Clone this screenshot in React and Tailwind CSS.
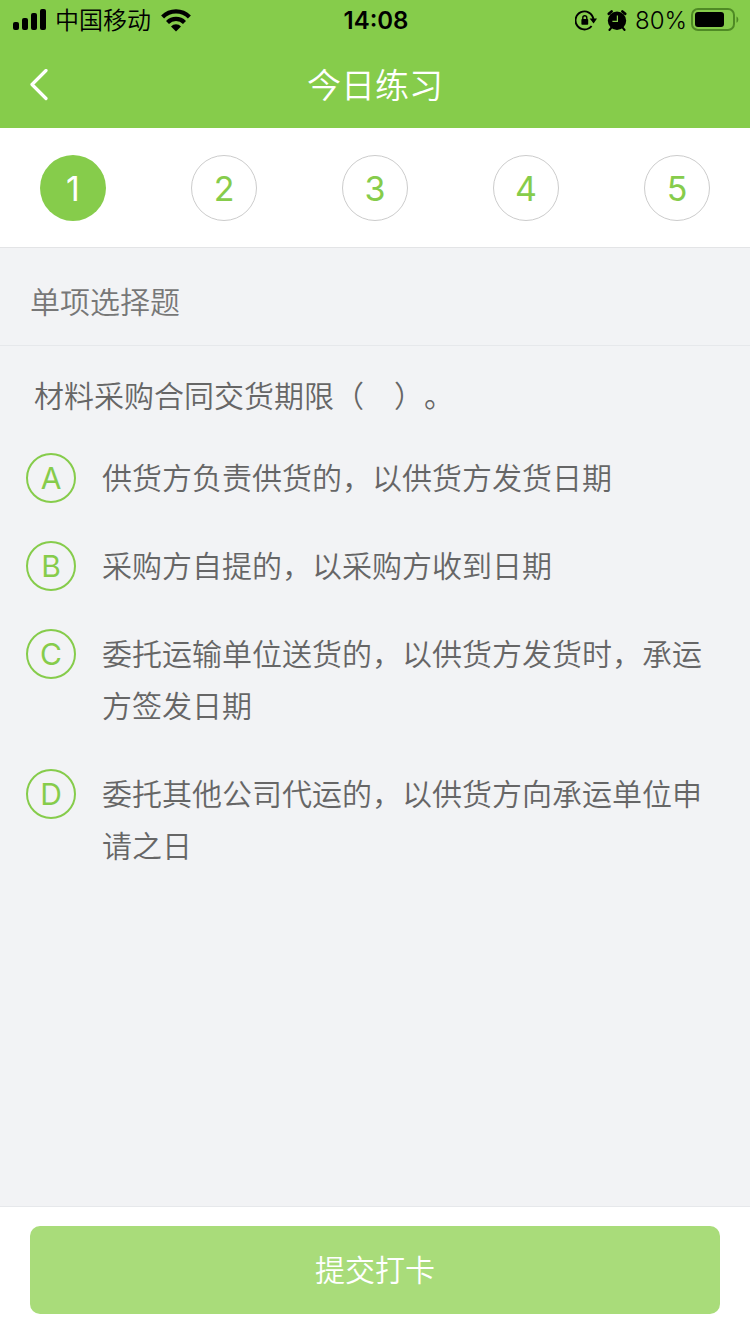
import { useState } from "react";

const questions = [1, 2, 3, 4, 5];

const options = [
  { key: "A", text: "供货方负责供货的，以供货方发货日期" },
  { key: "B", text: "采购方自提的，以采购方收到日期" },
  { key: "C", text: "委托运输单位送货的，以供货方发货时，承运方签发日期" },
  { key: "D", text: "委托其他公司代运的，以供货方向承运单位申请之日" },
];

function SignalIcon() {
  return (
    <svg width="34" height="24" viewBox="0 0 34 24" fill="currentColor">
      <rect x="0" y="13" width="6" height="8" rx="2" />
      <rect x="9" y="9" width="6" height="12" rx="2" />
      <rect x="18" y="4" width="6" height="17" rx="2" />
      <rect x="27" y="0" width="6" height="21" rx="2" />
    </svg>
  );
}

function WifiIcon() {
  return (
    <svg width="30" height="24" viewBox="0 0 30 24" fill="none" stroke="currentColor" strokeWidth="4.2">
      <path d="M1.6 8a19 19 0 0 1 26.8 0" />
      <path d="M6.5 13.4a12 12 0 0 1 17 0" />
      <path d="M15 22.4l-5-5a7 7 0 0 1 10 0z" fill="currentColor" stroke="none" />
    </svg>
  );
}

function RotationLockIcon() {
  return (
    <svg width="22" height="22" viewBox="0 0 22 22" fill="none" stroke="currentColor">
      <path d="M18.4 9A9 9 0 1 0 16.6 16" strokeWidth="1.9" />
      <path d="M14.6 8.4h7.4l-3.4 5.2z" fill="currentColor" stroke="none" />
      <rect x="6.4" y="9" width="6.8" height="5.8" rx="0.8" fill="currentColor" stroke="none" />
      <path d="M7.8 9.6V7.8a2 2 0 0 1 4 0v1.8" strokeWidth="1.4" />
    </svg>
  );
}

function AlarmIcon() {
  return (
    <svg width="20" height="22" viewBox="0 0 20 22" fill="none" stroke="currentColor">
      <circle cx="10" cy="10.8" r="9.2" fill="currentColor" stroke="none" />
      <path d="M1.8 3.8L4.6 1.4M18.2 3.8L15.4 1.4" strokeWidth="2.6" strokeLinecap="round" />
      <path d="M4.4 17.6L2.4 20M15.6 17.6L17.6 20" strokeWidth="2" strokeLinecap="round" />
      <path d="M10.4 5.4v6H5.4" stroke="#86cc4b" strokeWidth="1.2" />
    </svg>
  );
}

function BatteryIcon() {
  return (
    <svg width="48" height="26" viewBox="0 0 48 26" fill="none">
      <rect x="1" y="1" width="42" height="21" rx="6" stroke="#4f8a25" strokeWidth="2" />
      <rect x="4" y="4" width="29" height="15" rx="3" fill="#000" />
      <path d="M45.5 8.5c2.4 1 2.4 5.2 0 6.2z" fill="#4f8a25" />
    </svg>
  );
}

function StatusBar() {
  return (
    <div className="grid h-[42px] grid-cols-[1fr_auto_1fr] items-center pl-[13px] pr-[11px] text-2xl text-black">
      <div className="flex items-center gap-2">
        <SignalIcon />
        <span>中国移动</span>
        <span className="pl-0.5">
          <WifiIcon />
        </span>
      </div>
      <span className="font-semibold">14:08</span>
      <div className="flex items-center justify-end">
        <RotationLockIcon />
        <span className="pl-2.5 pr-2">
          <AlarmIcon />
        </span>
        <span className="pr-1">80%</span>
        <BatteryIcon />
      </div>
    </div>
  );
}

function App() {
  const [current, setCurrent] = useState(1);

  return (
    <div className="flex min-h-screen flex-col bg-[#f2f3f5] font-['Inter','Noto_Sans_CJK_SC',sans-serif] font-[350] text-[#666] [text-spacing-trim:space-all]">
      {/* Header */}
      <header className="bg-[#86cc4b] text-white">
        <StatusBar />
        <div className="grid h-[86px] grid-cols-[1fr_auto_1fr] items-center px-[30px]">
          <button type="button" aria-label="返回" className="justify-self-start">
            <svg width="18" height="32" viewBox="0 0 18 32" fill="none" stroke="currentColor" strokeWidth="3.2" strokeLinecap="round" strokeLinejoin="round">
              <path d="M16 1.5L2 15.5L16 29.5" />
            </svg>
          </button>
          <h1 className="text-[34px] font-[350]">今日练习</h1>
        </div>
      </header>

      {/* Question numbers */}
      <nav className="flex justify-between border-b border-[#e3e4e6] bg-white px-10 pt-[27px] pb-[26px]">
        {questions.map((n) => (
          <button
            key={n}
            type="button"
            onClick={() => setCurrent(n)}
            className={
              n === current
                ? "size-[66px] rounded-full bg-[#86cc4b] text-[34px] font-normal text-white"
                : "size-[66px] rounded-full border border-[#ccc] text-[34px] font-normal text-[#86cc4b]"
            }
          >
            {n}
          </button>
        ))}
      </nav>

      <main className="flex-1 text-[30px] leading-[52px]">
        <h2 className="border-b border-[#e6e8eb] px-[30px] pt-7 pb-[17px] font-[350] text-[#777]">单项选择题</h2>
        <fieldset aria-labelledby="question" className="pt-6">
          <p id="question" className="px-[34px] pb-[30px]">
            {"材料采购合同交货期限（\u3000）。"}
          </p>
          <div className="flex flex-col gap-9 pr-[30px] pl-[26px]">
            {options.map((option) => (
              <label key={option.key} className="flex items-start gap-[26px]">
                <span className="grid h-[52px] shrink-0 place-items-center">
                  <input
                    type="radio"
                    name="answer"
                    value={option.key}
                    className="peer col-start-1 row-start-1 size-[50px] appearance-none rounded-full border-2 border-[#86cc4b] checked:bg-[#86cc4b]"
                  />
                  <span className="col-start-1 row-start-1 font-normal text-[#86cc4b] peer-checked:text-white">
                    {option.key}
                  </span>
                </span>
                <span>{option.text}</span>
              </label>
            ))}
          </div>
        </fieldset>
      </main>

      {/* Submit */}
      <footer className="border-t border-[#e6e8eb] bg-white px-[30px] pt-[19px] pb-5">
        <button type="button" className="h-[88px] w-full rounded-[10px] bg-[#a9dc7a] text-[30px] text-white">
          提交打卡
        </button>
      </footer>
    </div>
  );
}

export default App;
